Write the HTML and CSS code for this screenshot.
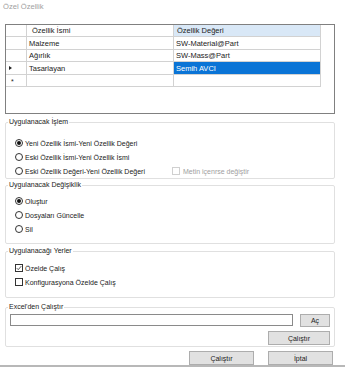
FILE: index.html
```html
<!DOCTYPE html>
<html lang="tr">
<head>
<meta charset="utf-8">
<link rel="stylesheet" href="styles.css">
</head>
<body>
<div class="window">
  <div class="title">Özel Özellik</div>

  <div class="grid-box">
    <div class="dg">
      <div class="rh"></div><div class="ch">Özellik İsmi</div><div class="ch ch-sel">Özellik Değeri</div>
      <div class="rh"></div><div class="c">Malzeme</div><div class="c">SW-Material@Part</div>
      <div class="rh"></div><div class="c">Ağırlık</div><div class="c">SW-Mass@Part</div>
      <div class="rh"><span class="arrow"></span></div><div class="c">Tasarlayan</div><div class="c sel">Semih AVCI</div>
      <div class="rh"><span class="star">*</span></div><div class="c"></div><div class="c"></div>
    </div>
  </div>

  <fieldset class="group g1">
    <legend>Uygulanacak İşlem</legend>
    <div class="opt"><span class="radio on"></span>Yeni Özellik İsmi-Yeni Özellik Değeri</div>
    <div class="opt"><span class="radio"></span>Eski Özellik İsmi-Yeni Özellik İsmi</div>
    <div class="opt">
      <span class="opt-main"><span class="radio"></span>Eski Özellik Değeri-Yeni Özellik Değeri</span>
      <span class="disabled"><span class="check off"></span>Metin içenrse değiştir</span>
    </div>
  </fieldset>

  <fieldset class="group g2">
    <legend>Uygulanacak Değişiklik</legend>
    <div class="opt"><span class="radio on"></span>Oluştur</div>
    <div class="opt"><span class="radio"></span>Dosyaları Güncelle</div>
    <div class="opt"><span class="radio"></span>Sil</div>
  </fieldset>

  <fieldset class="group g3">
    <legend>Uygulanacağı Yerler</legend>
    <div class="opt"><span class="check"><svg viewBox="0 0 8 8" width="6" height="6"><path d="M1 4.2 L3 6.2 L7 1.5" fill="none" stroke="#222" stroke-width="1"/></svg></span>Özelde Çalış</div>
    <div class="opt"><span class="check"></span>Konfigurasyona Özelde Çalış</div>
  </fieldset>

  <fieldset class="group g4">
    <legend>Excel'den Çalıştır</legend>
    <div class="file-row">
      <div class="input"></div>
      <div class="btn btn-open">Aç</div>
    </div>
    <div class="run-row">
      <div class="btn btn-run">Çalıştır</div>
    </div>
  </fieldset>

  <div class="actions">
    <div class="btn btn-main">Çalıştır</div>
    <div class="btn btn-main">İptal</div>
  </div>
  <div class="bottom-line"></div>
</div>
</body>
</html>
```

FILE: styles.css
```css
html, body {
  margin: 0;
  padding: 0;
  background: #ffffff;
}

.window {
  width: 345px;
  height: 368px;
  overflow: hidden;
  font-family: "Liberation Sans", Arial, sans-serif;
  font-size: 7px;
  color: #222;
  display: flex;
  flex-direction: column;
}

.title {
  padding: 2px 0 0 3px;
  height: 10px;
  line-height: 10px;
  font-size: 7.6px;
  color: #a0a0a0;
  margin-bottom: 12px;
}

.grid-box {
  margin-left: 5px;
  width: 330px;
  height: 90px;
  box-sizing: border-box;
  border: 1px solid #808080;
  background: #fff;
}

.dg {
  display: grid;
  grid-template-columns: 21px 147px 147px;
  grid-template-rows: 12px 13px 12px 13px 12px;
  font-size: 7.5px;
}

.dg > div {
  box-sizing: border-box;
  border-right: 1px solid #d2d2d2;
  border-bottom: 1px solid #d2d2d2;
  display: flex;
  align-items: center;
  white-space: nowrap;
  overflow: hidden;
}

.ch {
  padding-left: 5px;
  color: #222;
}

.ch-sel {
  background: #d9e8f7;
  padding-left: 3px;
}

.c {
  padding-left: 2px;
}

.sel {
  background: #0a74d6;
  color: #fff;
}

.rh {
  padding-left: 3px;
}

.arrow {
  width: 0;
  height: 0;
  border-left: 3px solid #222;
  border-top: 2.5px solid transparent;
  border-bottom: 2.5px solid transparent;
}

.star {
  font-size: 7px;
  line-height: 7px;
  margin-left: 2px;
  padding-top: 2px;
}

.group {
  margin: 0 0 0 5px;
  width: 330px;
  box-sizing: border-box;
  border: 1px solid #e0e0e0;
  border-radius: 2px;
  padding: 0 4px 0 2px;
  min-width: 0;
}

.group legend {
  padding: 0 1px;
  font-size: 7px;
  line-height: 10px;
  color: #222;
}

.g1 { margin-top: 3px; padding-top: 9px; }
.g2 { margin-top: 1px; padding-top: 4px; padding-bottom: 7px; }
.g3 { margin-top: 2px; padding-top: 5px; padding-bottom: 8px; }
.g4 { margin-top: 4px; padding-top: 2px; padding-bottom: 1px; }

.opt {
  height: 14px;
  display: flex;
  align-items: center;
  margin-left: 7px;
  white-space: nowrap;
}

.opt-main {
  display: flex;
  align-items: center;
  width: 157px;
}

.radio {
  width: 8px;
  height: 8px;
  box-sizing: border-box;
  border: 1px solid #333;
  border-radius: 50%;
  background: #fff;
  margin-right: 2px;
  display: flex;
  align-items: center;
  justify-content: center;
  flex: none;
}

.radio.on::after {
  content: "";
  width: 4px;
  height: 4px;
  border-radius: 50%;
  background: #111;
}

.check {
  width: 8px;
  height: 8px;
  box-sizing: border-box;
  border: 1px solid #333;
  background: #fff;
  margin-right: 2px;
  display: flex;
  align-items: center;
  justify-content: center;
  flex: none;
}

.check.off {
  border-color: #d0d0d0;
}

.disabled {
  display: flex;
  align-items: center;
  color: #a0a0a0;
}

.disabled .check {
  margin-right: 3px;
}

.file-row {
  display: flex;
  align-items: flex-start;
  gap: 7px;
  margin-left: 2px;
}

.input {
  flex: 1;
  height: 12px;
  box-sizing: border-box;
  border: 1px solid #8a8a8a;
  background: #fff;
}

.btn {
  box-sizing: border-box;
  background: #e1e1e1;
  border: 1px solid #adadad;
  display: flex;
  align-items: center;
  justify-content: center;
  font-size: 7px;
  color: #222;
}

.btn-open {
  width: 30px;
  height: 13px;
}

.run-row {
  display: flex;
  justify-content: flex-end;
  margin-top: 4px;
}

.btn-run {
  width: 62px;
  height: 14px;
}

.actions {
  display: flex;
  justify-content: flex-end;
  gap: 14px;
  padding-right: 12px;
  margin-top: 4px;
}

.btn-main {
  width: 65px;
  height: 14px;
}

.bottom-line {
  height: 2px;
  background: #b8b8b8;
}
```
